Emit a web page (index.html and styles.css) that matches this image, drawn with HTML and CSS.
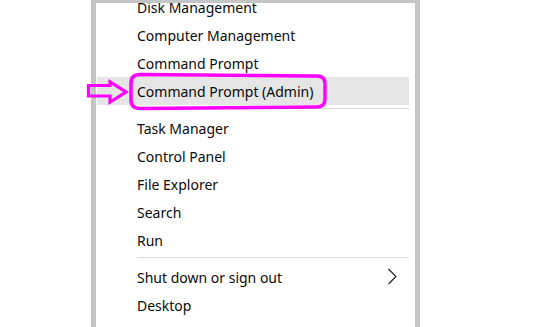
FILE: index.html
```html
<!DOCTYPE html>
<html>
<head>
<meta charset="utf-8">
<link rel="stylesheet" href="styles.css">
</head>
<body>
<div class="menu">
  <ul class="list">
    <li class="item">Disk Management</li>
    <li class="item">Computer Management</li>
    <li class="item">Command Prompt</li>
    <li class="item active">Command Prompt (Admin)</li>
    <li class="sep"></li>
    <li class="item">Task Manager</li>
    <li class="item">Control Panel</li>
    <li class="item">File Explorer</li>
    <li class="item">Search</li>
    <li class="item">Run</li>
    <li class="sep"></li>
    <li class="item sub">Shut down or sign out
      <svg class="chev" width="10" height="18" viewBox="0 0 10 18"><polyline points="1.5,1 9,8.5 1.5,16" fill="none" stroke="#1a1a1a" stroke-width="1.1"/></svg>
    </li>
    <li class="item">Desktop</li>
  </ul>
</div>
<svg class="annot" width="550" height="327" viewBox="0 0 550 327">
  <path d="M88.5 85.5 L110 85.5 L110 82 L126 92 L110 102 L110 96 L88.5 96 Z" fill="none" stroke="#ff00ff" stroke-width="3.2" stroke-linejoin="miter"/>
  <path d="M140 74.5 L317 76 Q325 76 325 84 L325 99 Q325 107 317 107 L140 108.5 Q131 108.5 131 100 L131 83 Q131 74.5 140 74.5 Z" fill="none" stroke="#ff00ff" stroke-width="3.5"/>
</svg>
</body>
</html>
```
FILE: styles.css
```css
html, body {
  margin: 0;
  padding: 0;
  background: #ffffff;
}
body {
  width: 550px;
  height: 327px;
  overflow: hidden;
  position: relative;
  font-family: "Noto Sans", "Open Sans", sans-serif;
  font-size: 14px;
  color: #0a0a0a;
}
.menu {
  margin-left: 91px;
  width: 319px;
  height: 324px;
  border-left: 5px solid #c4c4c4;
  border-right: 5px solid #c4c4c4;
  border-top: 3px solid #c4c4c4;
  overflow: hidden;
  background: #fff;
}
.list {
  list-style: none;
  margin: -10px 6px 0 1px;
  padding: 0;
}
.item {
  height: 28px;
  display: flex;
  align-items: center;
  padding-left: 40px;
  padding-right: 12px;
  white-space: nowrap;
}
.item.active {
  background: #e5e5e5;
}
.item.sub {
  justify-content: space-between;
}
.chev {
  display: block;
}
.sep {
  height: 1px;
  background: #d9d9d9;
  margin: 3px 0 5px 40px;
}
.annot {
  position: absolute;
  left: 0;
  top: 0;
  pointer-events: none;
}
```
